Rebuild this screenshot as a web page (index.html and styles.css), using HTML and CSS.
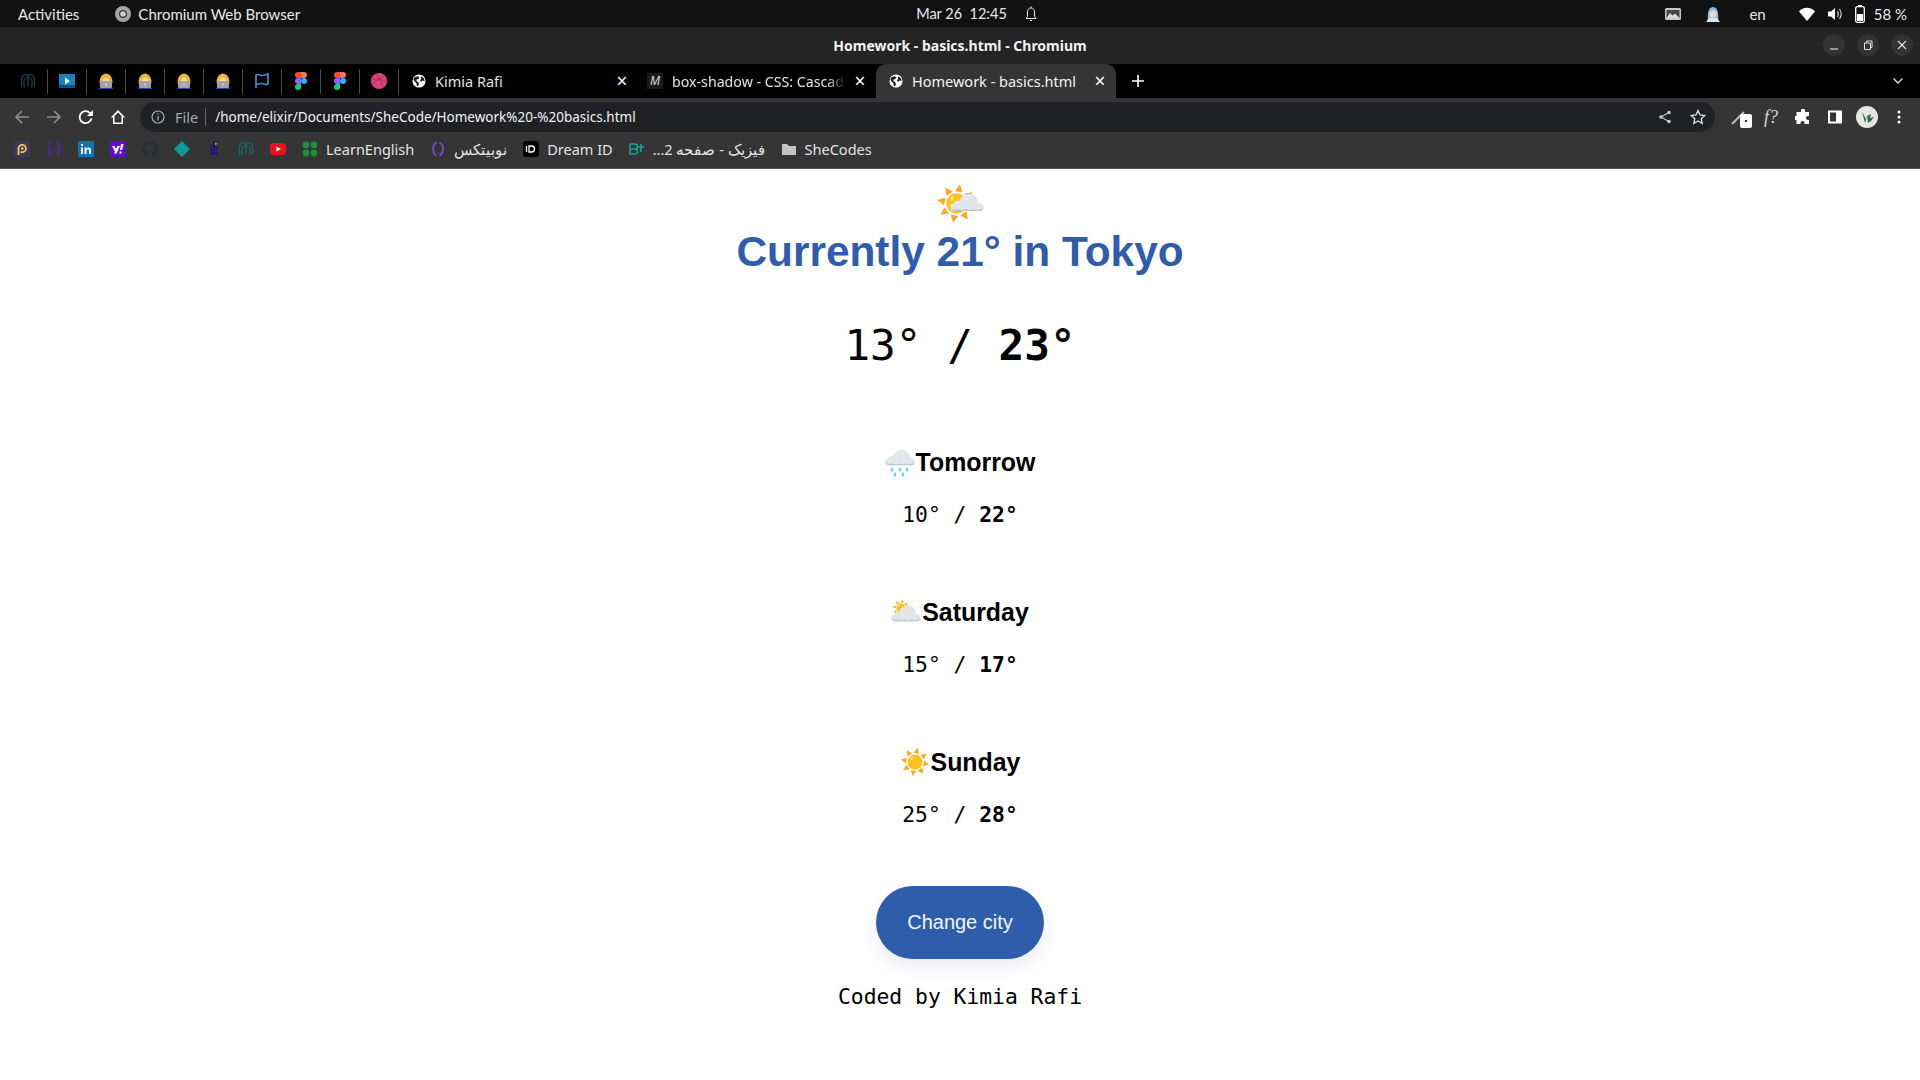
FILE: index.html
```html
<!DOCTYPE html>
<html lang="en">

<head>
    <meta charset="UTF-8">
    <meta name="viewport" content="width=device-width, initial-scale=1.0">
    <title>Homework - basics.html</title>
    <link rel="stylesheet" href="styles.css">
</head>

<body>
    <svg class="defs" width="0" height="0" aria-hidden="true">
        <symbol id="globe" viewBox="0 0 16 16">
            <circle cx="8" cy="8" r="7.500" fill="#fff" />
            <path d="M3 3.500 7 2.500 8.500 4 7 6 5.500 6 5 8 7 9 8 11.500 7 14 5.500 13.500 5 10.500 2.500 8 1.500 6zM10 2.500 13.500 4.500 14.500 8 12 7.500 10.500 9 9 7.500 10.500 5.500z" fill="#222" />
        </symbol>
        <symbol id="lock-face" viewBox="0 0 16 16">
            <path d="M1.500 10C1.500 4 4.500.5 8 .5s6.500 3.500 6.500 9.500z" fill="#f0b53c" />
            <path d="M5 8c0-2 1-3.500 3-3.500S11 6 11 8z" fill="#f9dca0" />
            <rect x="2" y="8" width="12" height="7" rx="1" fill="#a3a3a3" />
            <rect x="7" y="10.500" width="2" height="2" fill="#d0d0d0" />
            <path d="M1 15.500h14" stroke="#2f43a8" stroke-width="1" />
        </symbol>
        <symbol id="figma" viewBox="0 0 12 18">
            <path d="M6 0H3a3 3 0 0 0 0 6h3z" fill="#f24e1e" />
            <path d="M6 0h3a3 3 0 0 1 0 6H6z" fill="#ff7262" />
            <path d="M6 6H3a3 3 0 0 0 0 6h3z" fill="#a259ff" />
            <circle cx="9" cy="9" r="3" fill="#1abcfe" />
            <path d="M6 12H3a3 3 0 1 0 3 3z" fill="#0acf83" />
        </symbol>
        <symbol id="teal-arches" viewBox="0 0 16 16">
            <path d="M2 14C.5 7 1.500 1.500 5.500 1.500 7.500 1.500 8 3 8 4.500 8 3 8.500 1.500 10.500 1.500 14.500 1.500 15.500 7 14 14M4.500 14.500C3 9 3.500 4.500 8 4.500c4.500 0 5 4.500 3.500 10M8 4.500v9" fill="none" stroke="currentColor" stroke-width="1.200" />
        </symbol>
        <symbol id="sun" viewBox="-24 -24 48 48">
            <g fill="#ffa726" transform="rotate(10)">
                <polygon points="-4.500,-14 4.500,-14 0,-23" />
                <polygon points="-4.500,-14 4.500,-14 0,-23" transform="rotate(45)" />
                <polygon points="-4.500,-14 4.500,-14 0,-23" transform="rotate(90)" />
                <polygon points="-4.500,-14 4.500,-14 0,-23" transform="rotate(135)" />
                <polygon points="-4.500,-14 4.500,-14 0,-23" transform="rotate(180)" />
                <polygon points="-4.500,-14 4.500,-14 0,-23" transform="rotate(225)" />
                <polygon points="-4.500,-14 4.500,-14 0,-23" transform="rotate(270)" />
                <polygon points="-4.500,-14 4.500,-14 0,-23" transform="rotate(315)" />
            </g>
            <circle r="12" fill="#fcc21b" />
            <ellipse cx="-5" cy="-6" rx="2" ry="3" fill="#ffe082" transform="rotate(25 -5 -6)" />
        </symbol>
        <symbol id="cloud" viewBox="0 0 36 22">
            <path d="M4 21a4 4 0 0 1-1-8c1-3 4-4 7-3 1-5 6-9 12-8 5 1 8 5 8 10 3 0 6 2 6 5s-2 4-4 4z" fill="#e0e7ea" />
            <path d="M1 17.500c1 3 2 3.500 4 3.500h27c2 0 3-1 4-3.500-1 1-2 1.500-4 1.500-2 1-5 1-7 0-3 1-6 1-8 0-3 1-6 1-8 0-3 .5-6 .5-8-1.500z" fill="#b9c7cc" />
        </symbol>
    </svg>

    <div class="system-bar">
        <div class="system-left">
            <span>Activities</span>
            <span class="app-name">
                <svg class="icon-16" viewBox="0 0 16 16"><circle cx="8" cy="8" r="8" fill="#a5a5a5" /><circle cx="8" cy="8" r="4" fill="#333" /><circle cx="8" cy="8" r="2.800" fill="#ccc" /></svg>
                Chromium Web Browser
            </span>
        </div>
        <div class="system-clock">
            <span>Mar 26&nbsp; 12:45</span>
            <svg class="icon-16" viewBox="0 0 16 16"><path d="M3 12.500h10l-1.500-2V6c0-2.500-1.500-4-3.500-4S4.500 3.500 4.500 6v4.500zM7 14.500h2M8 .5V2" fill="none" stroke="#e8e8e8" stroke-width="1" /></svg>
        </div>
        <div class="system-right">
            <svg class="tray-photo" viewBox="0 0 16 12"><rect width="16" height="12" rx="1.500" fill="#c8c8c8" /><rect x="1.500" y="2" width="13" height="8" fill="#444" /><path d="M1.500 10 5 5l2.500 2.500L10 5.500l4.500 4.500z" fill="#ddd" /></svg>
            <svg class="tray-anime" viewBox="0 0 16 16"><path d="M3 15C2 6 4 1 8 1s6 5 5 14z" fill="#8dbfd6" /><circle cx="8" cy="8" r="3.500" fill="#e6d9d4" /><path d="M1 16l3-4h8l3 4z" fill="#dde3ea" /></svg>
            <span class="tray-lang">en</span>
            <svg class="tray-wifi" viewBox="0 0 16 14"><path d="M0 4.500C4-.5 12-.5 16 4.500L8 14z" fill="#fff" /></svg>
            <svg class="tray-volume" viewBox="0 0 16 16"><path d="M1 5.500h3L8 2v12l-4-3.500H1z" fill="#fff" /><path d="M10.500 5c1 2 1 4 0 6M12.500 3c2 3 2 7 0 10" fill="none" stroke="#ddd" stroke-width="1.100" /></svg>
            <svg class="tray-battery" viewBox="0 0 10 18"><rect x="3" width="4" height="2" fill="#fff" /><rect x=".7" y="1.700" width="8.600" height="15.600" rx="1.500" fill="none" stroke="#fff" stroke-width="1.300" /><rect x="2" y="9" width="6" height="7" fill="#fff" /></svg>
            <span>58 %</span>
        </div>
    </div>

    <div class="title-bar">
        <span class="window-title">Homework - basics.html - Chromium</span>
        <div class="window-controls">
            <span class="window-button"><svg class="icon-12" viewBox="0 0 12 12"><path d="M2 10h8" stroke="#ddd" stroke-width="1.200" /></svg></span>
            <span class="window-button"><svg class="icon-12" viewBox="0 0 12 12"><path d="M2.500 4h6v6.500h-6zM4.500 4V2h5.500v6.500H8.500" fill="none" stroke="#ddd" stroke-width="1" /></svg></span>
            <span class="window-button"><svg class="icon-12" viewBox="0 0 12 12"><path d="M2 2l8 8M10 2l-8 8" stroke="#ddd" stroke-width="1.200" /></svg></span>
        </div>
    </div>

    <div class="tab-strip">
        <div class="pinned-tab arches-dark"><svg class="icon-16"><use href="#teal-arches" /></svg></div>
        <div class="pinned-tab"><svg class="icon-16" viewBox="0 0 16 16"><rect y="1" width="16" height="14" fill="#1c7fc4" /><rect y="12" width="16" height="3" fill="#0e4f85" /><path d="M6 4.500 11 8l-5 3.500z" fill="#fff" /></svg></div>
        <div class="pinned-tab"><svg class="icon-16"><use href="#lock-face" /></svg></div>
        <div class="pinned-tab"><svg class="icon-16"><use href="#lock-face" /></svg></div>
        <div class="pinned-tab"><svg class="icon-16"><use href="#lock-face" /></svg></div>
        <div class="pinned-tab"><svg class="icon-16"><use href="#lock-face" /></svg></div>
        <div class="pinned-tab"><svg class="icon-16" viewBox="0 0 16 16"><path d="M2 15V2c3-1.500 4 .5 6 .5S11 2 14 1v10c-3 1.500-4-.5-6-.5S4 11 2 11.500" fill="none" stroke="#4d85cf" stroke-width="1.700" /></svg></div>
        <div class="pinned-tab"><svg class="icon-figma"><use href="#figma" /></svg></div>
        <div class="pinned-tab"><svg class="icon-figma"><use href="#figma" /></svg></div>
        <div class="pinned-tab"><svg class="icon-16" viewBox="0 0 16 16"><circle cx="8" cy="8" r="8" fill="#e0407f" /><path d="M5 1c3 3 6 8 7 14M1 6c4 1 9 0 12-3M1.500 11c3-4 8-5 13-3" fill="none" stroke="#a82459" stroke-width=".8" /></svg></div>
        <div class="tab tab-kimia">
            <svg class="icon-14"><use href="#globe" /></svg>
            <span class="tab-label">Kimia Rafi</span>
            <span class="tab-close">×</span>
        </div>
        <div class="tab tab-mdn">
            <span class="mdn-icon">M</span>
            <span class="tab-label tab-fade">box-shadow - CSS: Cascad</span>
            <span class="tab-close">×</span>
        </div>
        <div class="tab tab-active">
            <svg class="icon-14"><use href="#globe" /></svg>
            <span class="tab-label">Homework - basics.html</span>
            <span class="tab-close">×</span>
        </div>
        <svg class="new-tab" viewBox="0 0 12 12"><path d="M6 0v12M0 6h12" stroke="#fff" stroke-width="1.600" /></svg>
        <svg class="tab-search" viewBox="0 0 12 12"><path d="M1.500 3.500 6 8l4.500-4.500" fill="none" stroke="#ddd" stroke-width="1.400" /></svg>
    </div>

    <div class="toolbar">
        <div class="nav-button"><svg class="icon-16" viewBox="0 0 16 16"><path d="M15 8H2M8 2 2 8l6 6" fill="none" stroke="#8e8e8e" stroke-width="1.700" /></svg></div>
        <div class="nav-button"><svg class="icon-16" viewBox="0 0 16 16"><path d="M1 8h13M8 2l6 6-6 6" fill="none" stroke="#8e8e8e" stroke-width="1.700" /></svg></div>
        <div class="nav-button"><svg class="icon-16" viewBox="0 0 16 16"><path d="M13.500 9.500A6 6 0 1 1 12 4L14 6" fill="none" stroke="#fff" stroke-width="1.800" /><path d="M15 1v6H9z" fill="#fff" /></svg></div>
        <div class="nav-button"><svg class="icon-16" viewBox="0 0 16 16"><path d="M8 1 .8 8.500H3V15h10V8.500h2.200zM8 3.500l3.500 3.500v6.500h-7V7z" fill="#fff" fill-rule="evenodd" /></svg></div>
        <div class="omnibox">
            <svg class="icon-14" viewBox="0 0 14 14"><circle cx="7" cy="7" r="6" fill="none" stroke="#aaa" stroke-width="1.200" /><path d="M7 6v4.500M7 3.500v1.300" stroke="#aaa" stroke-width="1.300" /></svg>
            <span class="url-scheme">File</span>
            <span class="url-text">/home/elixir/Documents/SheCode/Homework%20-%20basics.html</span>
            <svg class="omni-share" viewBox="0 0 14 14"><path d="M11 2.500 3 7l8 4.500" fill="none" stroke="#c8c8c8" stroke-width="1.100" /><circle cx="11" cy="2.500" r="1.800" fill="#c8c8c8" /><circle cx="3" cy="7" r="1.800" fill="#c8c8c8" /><circle cx="11" cy="11.500" r="1.800" fill="#c8c8c8" /></svg>
            <svg class="omni-star" viewBox="0 0 16 16"><path d="M8 1.500l2 4.500 4.800.5-3.600 3.200 1 4.800L8 12l-4.200 2.500 1-4.800L1.200 6.500 6 6z" fill="none" stroke="#ddd" stroke-width="1.300" /></svg>
        </div>
        <div class="toolbar-actions">
            <div class="action">
                <svg class="icon-16" viewBox="0 0 16 16"><path d="M1 15 13 3" stroke="#bbb" stroke-width="2" /></svg>
                <span class="ext-badge"></span>
            </div>
            <div class="action func-icon"><i>f?</i></div>
            <div class="action"><svg class="icon-16" viewBox="0 0 16 16"><path d="M6 1.500a2 2 0 0 1 4 0V3h4v4h-1a2 2 0 0 0 0 4h1v4H9.500v-1a2 2 0 0 0-4 0v1H1.500v-4H.5a2 2 0 0 1 0-4h1V3H6z" fill="#fff" /></svg></div>
            <div class="action"><svg class="icon-16" viewBox="0 0 16 16"><path d="M1 1.500h14v13H1zM3 3.500v9h6v-9z" fill="#fff" fill-rule="evenodd" /></svg></div>
            <div class="action"><svg class="avatar" viewBox="0 0 22 22"><circle cx="11" cy="11" r="11" fill="#e6e6e2" /><path d="M6 6l3 11 2-7 1 7 3-2 3-4-4 1 1-4-4 2-1 3z" fill="#2f6b48" /></svg></div>
            <div class="action"><svg class="icon-16" viewBox="0 0 16 16"><circle cx="8" cy="3" r="1.500" fill="#fff" /><circle cx="8" cy="8" r="1.500" fill="#fff" /><circle cx="8" cy="13" r="1.500" fill="#fff" /></svg></div>
        </div>
    </div>

    <div class="bookmarks">
        <div class="bookmark-icon"><svg class="icon-16" viewBox="0 0 16 16"><rect width="16" height="16" rx="3" fill="#3c3a5c" /><path d="M4.500 14V7.500a3.700 3.700 0 1 1 3.700 3.700H6.500" fill="none" stroke="#f3c465" stroke-width="1.800" /><circle cx="8.200" cy="7.500" r="1.300" fill="#f3c465" /></svg></div>
        <div class="bookmark-icon"><svg class="icon-16" viewBox="0 0 16 16"><path d="M5 1.500C3 1.500 3.500 3 3.500 5S3.500 8 2 8c1.500 0 1.500 1 1.500 3s-.5 3.500 1.500 3.500M11 1.500c2 0 1.500 1.500 1.500 3.500s0 3 1.500 3c-1.500 0-1.500 1-1.500 3s.5 3.500-1.500 3.500" fill="none" stroke="#5a21d6" stroke-width="1.300" /><path d="M6.500 6.500v1M9.500 6.500v1M7 10.500h2" stroke="#5a21d6" stroke-width="1" /></svg></div>
        <div class="bookmark-icon"><svg class="icon-16" viewBox="0 0 16 16"><rect width="16" height="16" rx="1" fill="#0f73b6" /><path d="M3 6.500h2V13H3zM3 3h2v2H3zM6.500 6.500h2v1c1-1.500 4.500-1.500 4.500 1.500v4h-2V9.500c0-1.500-2.500-1.500-2.500 0V13h-2z" fill="#fff" /></svg></div>
        <div class="bookmark-icon"><svg class="icon-16" viewBox="0 0 16 16"><rect width="16" height="16" fill="#5f0fc4" /><path d="M2 5h2.500L6 8l1.500-3H10L6.500 12.500H4L5 10.500zM11 3h2.500L12 9h-2zM9.500 10.500h2v2h-2z" fill="#fff" /></svg></div>
        <div class="bookmark-icon"><svg class="icon-16" viewBox="0 0 16 16"><path d="M8 .5a7.500 7.500 0 0 0-2.400 14.600v-2.600C3 13 2.700 11.300 2.700 11.300c1 .6 1.500 1 3 1 .1-.6.300-1 .6-1.300C4 10.700 3 9.500 3 7.500c0-1 .3-1.800 1-2.500 0-1 0-1.700.2-2 1 0 1.800.5 2.300 1 1-.2 2-.2 3 0 .5-.5 1.300-1 2.300-1 .2.300.2 1 .2 2 .7.7 1 1.500 1 2.500 0 2-1 3.200-3.300 3.500.4.400.6 1 .6 1.700v3.400A7.500 7.500 0 0 0 8 .5z" fill="#2a2e33" /></svg></div>
        <div class="bookmark-icon"><svg class="icon-16" viewBox="0 0 16 16"><path d="M8 0l8 8-8 8-8-8z" fill="#0c9c98" /></svg></div>
        <div class="bookmark-icon"><svg class="icon-16" viewBox="0 0 16 16"><path d="M7 0h2v2l2 1-2 1v1h2v2h1v2h-1v3h1v2H4v-2h1V9H4V7h1V5h2zM6 7v1h1V7zM9 7v1h1V7zM6 10v1h1v-1zM9 10v1h1v-1z" fill="#21177a" fill-rule="evenodd" /><path d="M9 1.500 12 3 9 4z" fill="#c9a12b" /></svg></div>
        <div class="bookmark-icon arches-light"><svg class="icon-16"><use href="#teal-arches" /></svg></div>
        <div class="bookmark-icon"><svg class="icon-16" viewBox="0 0 16 16"><rect y="2" width="16" height="12" rx="3" fill="#e8141c" /><path d="M6.500 5.500 11 8l-4.500 2.500z" fill="#fff" /></svg></div>
        <div class="bookmark">
            <svg class="icon-16" viewBox="0 0 16 16"><g fill="#1e8e3e"><circle cx="4" cy="4" r="3.400" /><circle cx="12" cy="4" r="3.400" /><circle cx="4" cy="12" r="3.400" /><circle cx="12" cy="12" r="3.400" /></g></svg>
            <span>LearnEnglish</span>
        </div>
        <div class="bookmark">
            <svg class="icon-16" viewBox="0 0 16 16"><path d="M7 1.500C2 3 2 12 6 14.500M9.500 1.500c5 3 4.500 10 0 13" fill="none" stroke="#6a4bd8" stroke-width="2" /></svg>
            <bdi dir="rtl">نوبیتکس</bdi>
        </div>
        <div class="bookmark">
            <svg class="icon-16" viewBox="0 0 16 16"><rect width="16" height="16" rx="3" fill="#000" /><path d="M3.500 5v6M6 5v6h2.500a3 3 0 0 0 0-6z" fill="none" stroke="#fff" stroke-width="1.300" /></svg>
            <span>Dream ID</span>
        </div>
        <div class="bookmark">
            <svg class="icon-16" viewBox="0 0 16 16"><path d="M1 3h5a2.500 2.500 0 0 1 0 5H1zM1 8h5a2.500 2.500 0 0 1 0 5H1zM12 3v8M9 6h6" fill="none" stroke="#10a89c" stroke-width="1.500" /></svg>
            <bdi dir="rtl">فیزیک - صفحه 2...</bdi>
        </div>
        <div class="bookmark">
            <svg class="icon-16" viewBox="0 0 16 16"><path d="M1 3h5l2 2h7v9H1z" fill="#c4c4c4" /></svg>
            <span>SheCodes</span>
        </div>
    </div>

    <main class="weather">
        <svg class="current-icon" viewBox="0 0 48 42">
            <use href="#sun" x="0" y="0" width="41" height="41" />
            <use href="#cloud" x="14.500" y="9" width="33" height="20" />
        </svg>
        <h1 class="current-title">Currently 21° in Tokyo</h1>
        <p class="current-temp">13° / <strong>23°</strong></p>

        <section class="day">
            <h2 class="day-name">
                <svg class="day-icon" viewBox="0 0 30 30">
                    <use href="#cloud" x="0" y="1" width="30" height="18" />
                    <path d="M7 20c-1.800 2.500-1.800 4.500 0 4.500S8.800 22.500 7 20zM15 20c-1.800 2.500-1.800 4.500 0 4.500s1.800-2 0-4.500zM22 20c-1.800 2.500-1.800 4.500 0 4.500s1.800-2 0-4.500zM10 25c-1.800 2.500-1.800 4.500 0 4.500s1.800-2 0-4.500zM18 25c-1.800 2.500-1.800 4.500 0 4.500s1.800-2 0-4.500z" fill="#6ec6f5" />
                </svg>
                Tomorrow
            </h2>
            <p class="day-temp">10° / <strong>22°</strong></p>
        </section>

        <section class="day">
            <h2 class="day-name">
                <svg class="day-icon" viewBox="0 0 30 30">
                    <use href="#sun" x="1" y="2" width="18" height="18" />
                    <use href="#cloud" x="0" y="7" width="30" height="18" />
                </svg>
                Saturday
            </h2>
            <p class="day-temp">15° / <strong>17°</strong></p>
        </section>

        <section class="day">
            <h2 class="day-name">
                <svg class="day-icon" viewBox="0 0 30 30"><use href="#sun" x="0" y="0" width="30" height="30" /></svg>
                Sunday
            </h2>
            <p class="day-temp">25° / <strong>28°</strong></p>
        </section>

        <button class="change-city" type="button">Change city</button>
        <footer class="credit">Coded by Kimia Rafi</footer>
    </main>
</body>

</html>
```

FILE: styles.css
```css
body {
    margin: 0;
    height: 100vh;
    overflow: hidden;
    background-color: #fff;
    font-family: "Noto Sans", sans-serif;
}

.defs {
    position: absolute;
}

svg {
    display: block;
    flex: none;
}

.icon-12 {
    width: 12px;
    height: 12px;
}

.icon-14 {
    width: 14px;
    height: 14px;
}

.icon-16 {
    width: 16px;
    height: 16px;
}

.icon-figma {
    width: 12px;
    height: 18px;
}

.arches-dark {
    color: #0f4a50;
}

.arches-light {
    color: #1b6d72;
}

/* system bar */
.system-bar {
    height: 27px;
    padding: 0 13px 0 18px;
    display: grid;
    grid-template-columns: 1fr auto 1fr;
    align-items: center;
    background-color: #121212;
    color: #e8e8e8;
    font-family: Lato, sans-serif;
    font-size: 15px;
}

.system-left {
    display: flex;
    align-items: center;
    gap: 36px;
}

.app-name {
    display: flex;
    align-items: center;
    gap: 7px;
}

.system-clock {
    margin-left: 30px;
    display: flex;
    align-items: center;
    gap: 16px;
    font-size: 14.5px;
}

.system-right {
    display: flex;
    align-items: center;
    justify-content: flex-end;
}

.tray-photo {
    width: 16px;
    height: 12px;
}

.tray-anime {
    width: 16px;
    height: 16px;
    margin-left: 24px;
}

.tray-lang {
    margin-left: 28px;
}

.tray-wifi {
    width: 16px;
    height: 14px;
    margin-left: 33px;
}

.tray-volume {
    width: 16px;
    height: 16px;
    margin-left: 12px;
}

.tray-battery {
    width: 10px;
    height: 18px;
    margin-left: 12px;
}

.system-right span:last-child {
    margin-left: 9px;
}

/* title bar */
.title-bar {
    position: relative;
    height: 37px;
    display: flex;
    align-items: center;
    justify-content: center;
    background-color: #242424;
    color: #f2f2f2;
    font-size: 14px;
    font-weight: 700;
}

.window-controls {
    position: absolute;
    top: 7px;
    right: 7px;
    display: flex;
    gap: 12px;
}

.window-button {
    width: 22px;
    height: 22px;
    display: flex;
    align-items: center;
    justify-content: center;
    border-radius: 50%;
    background-color: #333;
}

/* tab strip */
.tab-strip {
    height: 34px;
    padding-left: 9px;
    display: flex;
    align-items: center;
    background-color: #000;
    color: #e3e3e3;
    font-size: 14.5px;
}

.pinned-tab {
    width: 39px;
    height: 25px;
    box-sizing: border-box;
    display: flex;
    align-items: center;
    justify-content: center;
    border-right: 1px solid #4a4a4a;
}

.tab {
    height: 34px;
    box-sizing: border-box;
    display: flex;
    align-items: center;
    gap: 9px;
}

.tab-kimia {
    width: 239px;
    padding: 0 10px 0 13px;
}

.tab-mdn {
    width: 238px;
    padding: 0 10px 0 9px;
}

.tab-active {
    width: 240px;
    padding: 0 10px 0 13px;
    border-radius: 10px 10px 0 0;
    background-color: #353535;
    color: #f2f2f2;
}

.tab-label {
    flex: 1;
    min-width: 0;
    white-space: nowrap;
    overflow: hidden;
}

.tab-fade {
    font-size: 14.2px;
    -webkit-mask-image: linear-gradient(to right, #000 90%, transparent);
    mask-image: linear-gradient(to right, #000 90%, transparent);
}

.tab-close {
    width: 12px;
    text-align: center;
    font-size: 19px;
    line-height: 20px;
    color: #fff;
}

.mdn-icon {
    width: 16px;
    height: 16px;
    background-color: #1b1b1b;
    color: #ddd;
    font-size: 12px;
    font-style: italic;
    line-height: 16px;
    text-align: center;
}

.new-tab {
    width: 12px;
    height: 12px;
    margin-left: 16px;
}

.tab-search {
    width: 12px;
    height: 12px;
    margin-left: auto;
    margin-right: 16px;
}

/* toolbar */
.toolbar {
    height: 34px;
    padding: 4px 0 0 6px;
    box-sizing: border-box;
    display: flex;
    align-items: center;
    background-color: #353535;
}

.nav-button {
    width: 32px;
    display: flex;
    justify-content: center;
}

.omnibox {
    width: 1575px;
    height: 30px;
    margin-left: 6px;
    padding: 0 9px 0 11px;
    box-sizing: border-box;
    display: flex;
    align-items: center;
    border-radius: 15px;
    background-color: #202124;
    font-size: 14.5px;
}

.url-scheme {
    margin-left: 10px;
    padding-right: 7px;
    border-right: 1px solid #666;
    color: #a8a8a8;
    line-height: 18px;
}

.url-text {
    margin-left: 9px;
    color: #f2f2f2;
    font-size: 13.5px;
}

.omni-share {
    width: 14px;
    height: 14px;
    margin-left: auto;
    margin-right: 18px;
}

.omni-star {
    width: 16px;
    height: 16px;
}

.toolbar-actions {
    display: flex;
    margin-left: 8px;
}

.action {
    position: relative;
    width: 32px;
    display: flex;
    align-items: center;
    justify-content: center;
}

.func-icon {
    color: #d8d8d8;
    font-family: "Liberation Serif", serif;
    font-size: 18px;
    line-height: 16px;
}

.ext-badge {
    position: absolute;
    left: 17px;
    top: 8px;
    width: 12px;
    height: 14px;
    border-radius: 2px;
    background: radial-gradient(circle, #333 1px, #fff 1.500px);
}

.avatar {
    width: 22px;
    height: 22px;
}

/* bookmarks */
.bookmarks {
    height: 37px;
    padding: 0 0 2px 6px;
    display: flex;
    align-items: center;
    background-color: #353535;
    color: #e3e3e3;
    font-size: 14.5px;
    border-bottom: 1px solid #555;
    box-sizing: border-box;
}

.bookmark-icon {
    width: 32px;
    display: flex;
    justify-content: center;
}

.bookmark {
    display: flex;
    align-items: center;
    gap: 8px;
    margin-left: 8px;
    margin-right: 8px;
}

.bookmark:first-of-type {
    margin-left: 0;
}

/* page */
.weather {
    padding-top: 14px;
    display: flex;
    flex-direction: column;
    align-items: center;
    text-align: center;
    color: #000;
}

.current-icon {
    width: 48px;
    height: 42px;
    margin-bottom: 3px;
}

.current-title {
    margin: 0;
    color: #2f5dab;
    font-family: "Liberation Sans", sans-serif;
    font-size: 42.4px;
    line-height: 48px;
}

.current-temp {
    margin: 43px 0 0;
    font-family: "DejaVu Sans Mono", monospace;
    font-size: 42.67px;
    line-height: 52px;
}

.day {
    margin-top: 76px;
}

.day + .day {
    margin-top: 67px;
}

.day-name {
    margin: 0;
    display: flex;
    align-items: center;
    justify-content: center;
    gap: 1px;
    font-family: "Liberation Sans", sans-serif;
    font-size: 24.89px;
    line-height: 30px;
}

.day-icon {
    width: 30px;
    height: 30px;
}

.day-temp {
    margin: 23px 0 0;
    font-family: "DejaVu Sans Mono", monospace;
    font-size: 21.33px;
    line-height: 30px;
}

.change-city {
    width: 168px;
    height: 73px;
    margin-top: 56px;
    border: none;
    border-radius: 37px;
    background-color: #2f5dab;
    color: #f4f6fb;
    font-family: "Liberation Sans", sans-serif;
    font-size: 20px;
    box-shadow: 0 8px 16px rgba(47, 60, 120, 0.1);
}

.credit {
    margin-top: 23px;
    font-family: "DejaVu Sans Mono", monospace;
    font-size: 21.33px;
    line-height: 30px;
}
```
